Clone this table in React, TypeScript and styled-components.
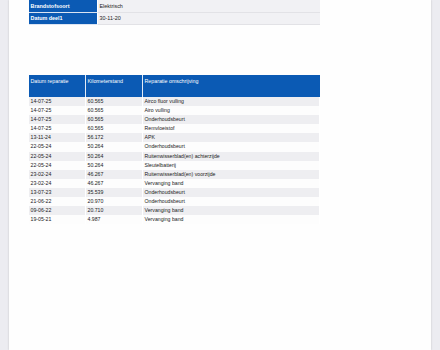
import React from "react";
import styled, { createGlobalStyle } from "styled-components";

const Global = createGlobalStyle`
  html, body { margin: 0; padding: 0; }
  body {
    background: #ececf1;
    font-family: "Liberation Sans", Arial, sans-serif;
    width: 440px;
    height: 350px;
    overflow: hidden;
  }
`;

const Sheet = styled.div`
  margin: 0 9px;
  width: 422px;
  height: 350px;
  background: #fefefe;
  box-shadow: 0 0 2px rgba(0, 0, 0, 0.18);
  padding: 0 0 0 20px;
  box-sizing: border-box;
  display: flex;
  flex-direction: column;
`;

const InfoTable = styled.div`
  display: grid;
  grid-template-columns: 69px 222px;
  width: 291px;
  grid-auto-rows: 12.5px;
`;

const InfoLabel = styled.div`
  background: #0b5ab4;
  color: #ffffff;
  font-weight: bold;
  font-size: 5.4px;
  display: flex;
  align-items: center;
  padding-left: 1.5px;
  border-bottom: 0.6px solid #dbe4f2;
  border-right: 0.6px solid #ffffff;
`;

const InfoValue = styled.div`
  background: #f1f1f4;
  color: #222;
  font-size: 5.4px;
  display: flex;
  align-items: center;
  padding-left: 1.5px;
  border-bottom: 0.6px solid #e2e2e6;
`;

const RepairTable = styled.div`
  margin-top: 50px;
  width: 291px;
  display: grid;
  grid-template-columns: 57px 57px 177px;
`;

const HeadCell = styled.div`
  background: #0b5ab4;
  color: #ffffff;
  font-size: 5.3px;
  height: 22px;
  padding: 2.5px 0 0 1.5px;
  box-sizing: border-box;
  border-right: 0.6px solid ${(p: { last?: boolean }) => (p.last ? "#0b5ab4" : "#e3ebf6")};
`;

const Cell = styled.div<{ striped: boolean }>`
  background: ${(p) => (p.striped ? "#eeeef1" : "#fdfdfd")};
  color: #222;
  font-size: 5.2px;
  height: 9.1px;
  line-height: 9.1px;
  padding-left: 1.5px;
  box-sizing: border-box;
  white-space: nowrap;
  overflow: hidden;
  border-right: 0.6px solid #ffffff;
`;

const repairs: [string, string, string][] = [
  ["14-07-25", "60.565", "Airco fluor vulling"],
  ["14-07-25", "60.565", "Airo vulling"],
  ["14-07-25", "60.565", "Onderhoudsbeurt"],
  ["14-07-25", "60.565", "Remvloeistof"],
  ["13-11-24", "56.172", "APK"],
  ["22-05-24", "50.264", "Onderhoudsbeurt"],
  ["22-05-24", "50.264", "Ruitenwisserblad(en) achterzijde"],
  ["22-05-24", "50.264", "Sleutelbatterij"],
  ["23-02-24", "46.267", "Ruitenwisserblad(en) voorzijde"],
  ["23-02-24", "46.267", "Vervanging band"],
  ["13-07-23", "35.539", "Onderhoudsbeurt"],
  ["21-06-22", "20.970", "Onderhoudsbeurt"],
  ["09-06-22", "20.710", "Vervanging band"],
  ["19-05-21", "4.987", "Vervanging band"],
];

export default function App() {
  return (
    <>
      <Global />
      <Sheet>
        <InfoTable>
          <InfoLabel>Brandstofsoort</InfoLabel>
          <InfoValue>Elektrisch</InfoValue>
          <InfoLabel>Datum deel1</InfoLabel>
          <InfoValue>30-11-20</InfoValue>
        </InfoTable>
        <RepairTable>
          <HeadCell>Datum reparatie</HeadCell>
          <HeadCell>Kilometerstand</HeadCell>
          <HeadCell last>Reparatie omschrijving</HeadCell>
          {repairs.map((r, i) => (
            <React.Fragment key={i}>
              <Cell striped={i % 2 === 0}>{r[0]}</Cell>
              <Cell striped={i % 2 === 0}>{r[1]}</Cell>
              <Cell striped={i % 2 === 0}>{r[2]}</Cell>
            </React.Fragment>
          ))}
        </RepairTable>
      </Sheet>
    </>
  );
}
